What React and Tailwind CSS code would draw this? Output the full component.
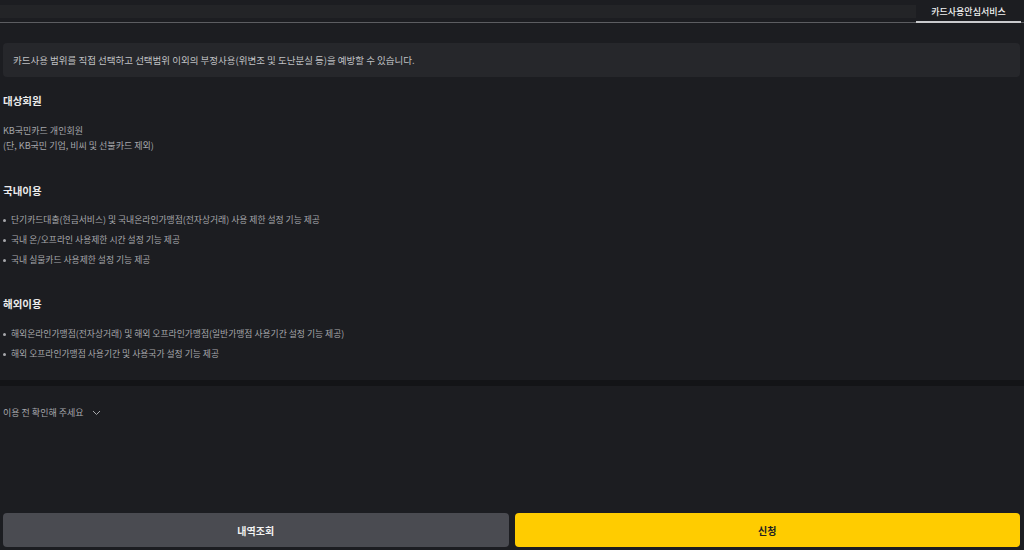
const domestic = [
  "단기카드대출(현금서비스) 및 국내온라인가맹점(전자상거래) 사용 제한 설정 기능 제공",
  "국내 온/오프라인 사용제한 시간 설정 기능 제공",
  "국내 실물카드 사용제한 설정 기능 제공",
];

const overseas = [
  "해외온라인가맹점(전자상거래) 및 해외 오프라인가맹점(일반가맹점 사용기간 설정 기능 제공)",
  "해외 오프라인가맹점 사용기간 및 사용국가 설정 기능 제공",
];

function Bullets({ items, className }) {
  return (
    <ul className={className}>
      {items.map((t) => (
        <li key={t} className="flex items-center h-[20px] text-[8.8px] text-[#a6a7ab]">
          <span className="w-[3px] h-[3px] rounded-full bg-[#a6a7ab] mr-[5px]" />
          {t}
        </li>
      ))}
    </ul>
  );
}

export default function App() {
  return (
    <div
      className="w-[1024px] h-[550px] bg-[#1c1d21] flex flex-col overflow-hidden"
      style={{ fontFamily: '"Noto Sans CJK KR", "Noto Sans", sans-serif' }}
    >
      {/* tab bar */}
      <div className="flex h-[23px] border-b border-[#5c5d61] pr-[3px]">
        <div className="flex-1 mt-[5px] h-[13px] bg-[#232427]" />
        <div className="w-[105px] pt-[4px] border-b-2 border-[#c9cacd] -mb-[1px] text-center text-[9px] leading-[15px] font-medium text-[#f0f0f0]">
          카드사용안심서비스
        </div>
      </div>

      <div className="px-[3px] pr-[4px]">
        <div className="mt-[20px] h-[34px] rounded-[4px] bg-[#26272b] flex items-center px-[10px] text-[9.5px] text-[#c0c1c4]">
          카드사용 범위를 직접 선택하고 선택범위 이외의 부정사용(위변조 및 도난분실 등)을 예방할 수 있습니다.
        </div>

        <h3 className="mt-[17px] text-[10.5px] leading-[14px] font-bold text-[#ececec]">대상회원</h3>
        <p className="mt-[15px] text-[9px] leading-[15px] text-[#a6a7ab]">
          KB국민카드 개인회원
          <br />
          (단, KB국민 기업, 비씨 및 선불카드 제외)
        </p>

        <h3 className="mt-[31px] text-[10.5px] leading-[14px] font-bold text-[#ececec]">국내이용</h3>
        <Bullets items={domestic} className="mt-[12px]" />

        <h3 className="mt-[27px] text-[10.5px] leading-[14px] font-bold text-[#ececec]">해외이용</h3>
        <Bullets items={overseas} className="mt-[13px]" />
      </div>

      <div className="mt-[16px] h-[6px] bg-[#131417]" />

      <div className="mt-[17px] px-[3px] flex items-center gap-[8px] h-[20px] text-[9px] text-[#a6a7ab]">
        이용 전 확인해 주세요
        <svg width="9" height="6" viewBox="0 0 9 6" fill="none">
          <path d="M1 1l3.5 3.5L8 1" stroke="#a6a7ab" strokeWidth="1" />
        </svg>
      </div>

      <div className="flex-1" />

      <div className="flex gap-[6px] pl-[3px] pr-[4px] pb-[3px]">
        <button className="flex-1 h-[34px] rounded-[4px] bg-[#4a4b51] text-[10px] font-bold text-[#f2f2f2]">
          내역조회
        </button>
        <button className="flex-1 h-[34px] rounded-[4px] bg-[#ffcc00] text-[10px] font-bold text-[#222]">
          신청
        </button>
      </div>
    </div>
  );
}
